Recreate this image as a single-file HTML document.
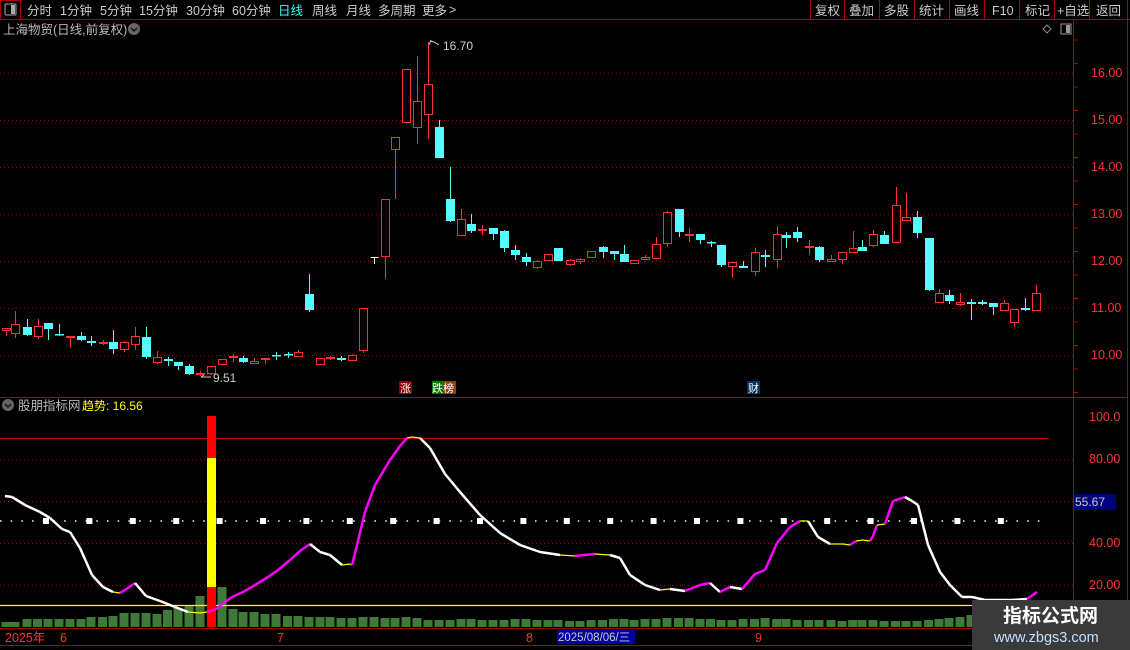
<!DOCTYPE html>
<html><head><meta charset="utf-8"><style>
body{margin:0;background:#000;width:1130px;height:650px;overflow:hidden;font-family:"Liberation Sans","Noto Sans CJK SC",sans-serif}
svg{position:absolute;left:0;top:0}
text{font-family:"Liberation Sans","Noto Sans CJK SC",sans-serif}
</style></head><body>
<svg id="s" width="1130" height="650" xmlns="http://www.w3.org/2000/svg">
<rect width="1130" height="650" fill="#000"/>
<line x1="0" y1="19.5" x2="1130" y2="19.5" stroke="#b00000"/>
<rect x="0.5" y="0.5" width="20" height="19" fill="none" stroke="#b00000"/>
<rect x="5" y="4" width="11" height="11" fill="none" stroke="#aaa" rx="1"/><rect x="11" y="5" width="4" height="9" fill="#aaa"/>
<g font-size="12.5" fill="#ccc">
<text x="27" y="15">分时</text><text x="60" y="15">1分钟</text><text x="100" y="15">5分钟</text><text x="139" y="15">15分钟</text><text x="186" y="15">30分钟</text><text x="232" y="15">60分钟</text>
<text x="278" y="15" fill="#3ff">日线</text><text x="312" y="15">周线</text><text x="346" y="15">月线</text><text x="378" y="15">多周期</text><text x="422" y="15">更多</text><text x="449" y="14">&gt;</text>
<text x="815" y="15">复权</text><text x="849" y="15">叠加</text><text x="884" y="15">多股</text><text x="919" y="15">统计</text><text x="954" y="15">画线</text><text x="992" y="15">F10</text><text x="1025" y="15">标记</text><text x="1057" y="15">+自选</text><text x="1096" y="15">返回</text>
<text x="3" y="34" fill="#bbb">上海物贸(日线,前复权)</text>
<text x="18" y="410" fill="#bbb">股朋指标网</text>
</g>
<g stroke="#b00000"><line x1="810.5" y1="0" x2="810.5" y2="19"/><line x1="844.5" y1="0" x2="844.5" y2="19"/><line x1="879.5" y1="0" x2="879.5" y2="19"/><line x1="914.5" y1="0" x2="914.5" y2="19"/><line x1="949.5" y1="0" x2="949.5" y2="19"/><line x1="984.5" y1="0" x2="984.5" y2="19"/><line x1="1019.5" y1="0" x2="1019.5" y2="19"/><line x1="1054.5" y1="0" x2="1054.5" y2="19"/><line x1="1089.5" y1="0" x2="1089.5" y2="19"/><line x1="1127.5" y1="0" x2="1127.5" y2="650"/></g>
<circle cx="134" cy="29" r="6" fill="#666"/><path d="M131 28l3 3 3-3" stroke="#111" fill="none" stroke-width="1.5"/>
<circle cx="8" cy="405" r="6" fill="#666"/><path d="M5 404l3 3 3-3" stroke="#111" fill="none" stroke-width="1.5"/>
<text x="82" y="410" font-size="12" fill="#ff0">趋势: 16.56</text>
<path d="M1047 25l4 4-4 4-4-4z" fill="none" stroke="#888"/>
<rect x="1061" y="24" width="10" height="10" fill="none" stroke="#999"/><rect x="1066" y="25" width="4" height="8" fill="#999"/>
<line x1="1073.5" y1="20" x2="1073.5" y2="628" stroke="#b00000"/>
<line x1="0" y1="397.5" x2="1127" y2="397.5" stroke="#b00000"/>
<line x1="0" y1="628.5" x2="1073" y2="628.5" stroke="#b00000"/>
<line x1="0" y1="645.5" x2="1130" y2="645.5" stroke="#b00000"/>
<g id="g"></g>
<rect x="399" y="381" width="13" height="13" fill="#800"/><text x="400" y="392" font-size="11" fill="#fff">涨</text>
<rect x="432" y="381" width="12" height="13" fill="#070"/><rect x="444" y="381" width="12" height="13" fill="#840"/><text x="432" y="392" font-size="11" fill="#fff">跌榜</text>
<rect x="747" y="381" width="13" height="13" fill="#036"/><text x="748" y="392" font-size="11" fill="#fff">财</text>
<text x="443" y="50" font-size="12" fill="#ccc">16.70</text><path d="M429 45l2-5 M430 41l4 1 5 3" stroke="#ccc" fill="none"/>
<text x="213" y="382" font-size="12" fill="#ccc">9.51</text><path d="M201 377h10 M201 377l3-2" stroke="#ccc" fill="none"/>
<g font-size="12.5" fill="#f33">
<text x="1091" y="77">16.00</text><text x="1091" y="124">15.00</text><text x="1091" y="171">14.00</text><text x="1091" y="218">13.00</text><text x="1091" y="265">12.00</text><text x="1091" y="312">11.00</text><text x="1091" y="359">10.00</text>
<text x="1089" y="421">100.0</text><text x="1089" y="463">80.00</text><text x="1089" y="547">40.00</text><text x="1089" y="589">20.00</text>
<text x="5" y="642">2025年</text><text x="60" y="642">6</text><text x="277" y="642">7</text><text x="526" y="642">8</text><text x="755" y="642">9</text>
</g>
<rect x="1074" y="494" width="42" height="16" fill="#00007a"/><text x="1075" y="506" font-size="12" fill="#ccc">55.67</text>
<rect x="557" y="630" width="78" height="14" fill="#0000a0"/><text x="558" y="641" font-size="11.5" fill="#ccc">2025/08/06/三</text>
<rect x="972" y="600" width="158" height="50" fill="#3a3a3a"/>
<text x="1003" y="622" font-size="19" font-weight="bold" fill="#fff">指标公式网</text>
<text x="994" y="642" font-size="14.5" fill="#bfe0ff">www.zbgs3.com</text>
</svg>
<script>
var g=document.getElementById('g'),h='';
function L(x1,y1,x2,y2,c,w,d){h+='<line x1="'+x1+'" y1="'+y1+'" x2="'+x2+'" y2="'+y2+'" stroke="'+c+'" stroke-width="'+(w||1)+'"'+(d?' stroke-dasharray="'+d+'"':'')+'/>';}
[73,120,167,214,261,308,355].forEach(function(y){L(0,y+.5,1073,y+.5,'#b00000',1,'1 3');});
for(var y=40;y<628;y+=23.5){if(y<397)L(1073,y,1078,y,'#b00000');}
[459,501,543,585].forEach(function(y){L(0,y+.5,1073,y+.5,'#b00000',1,'1 3');});
L(0,438.5,1049,438.5,'#c00000');
var X=[6,15,27,37.5,48,59,70,81,91,102.5,113,124,135,146,157,167.5,178,189,200,211,222,233,243,254,265,276,287.5,298,309,320,330,341,352,363,374,385,395,406,417,428,439,450,461,471,482,493,504,515,526,537,548,558,569.5,580,591,602.5,613.5,624,634,645,656,667,678.5,689,700,710.5,721,732,743,754.5,765,776.6,786,797,808.6,819,831,842,852.6,862,873,884,895.5,906,917,928.6,939,949,960,971,982,993,1004,1014,1025,1036];
var B=[622,622,619,619,619,619,619,619,617,617,616,613,613,613,614,610,608,606,596,587,587,609,612,612,614,614,616,616,617,617,617,618,618,617,617,618,618,617,618,620,620,620,619,619,620,620,620,619,619,620,620,620,621,621,620,620,619,619,620,619,619,618,618,618,619,619,620,620,619,619,618,619,619,620,620,620,620,621,620,620,620,621,621,621,621,620,619,618,617,615,612,610,607,606,604,604,605,606];
X.forEach(function(x,i){var t=B[i]||620;if(i==19)return;h+='<rect x="'+(x-4.5)+'" y="'+t+'" width="9" height="'+(627-t)+'" fill="#3f7a3a"/>';});
L(0,605.5,1130,605.5,'#ffff00',1.2);
L(0,521,1040,521,'#fff',1.5,'1.5 9.2');
for(var x=46;x<1040;x+=43.4)h+='<rect x="'+(x-3)+'" y="518" width="6" height="6" fill="#fff"/>';
var D="r328,331,328,336|r324,334,311,338|c327,335,319,336|r326,337,319,339|c323,329,323,340|c334,335,324,336|r336,337,336,347|c336,340,332,341|c341,343,336,346|r342,344,340,345|c342,349,330,354|r342,350,341,352|r336,345,327,350|c337,357,327,359|r357,363,351,364|c359,361,357,366|c362,366,362,370|c366,374,364,375|r373,375,371,376|r366,374,366,375|r359,365,359,365|r356,358,354,362|c358,362,356,363|r361,364,358,364|r358,359,358,364|c355,356,352,360|c354,355,352,358|r352,357,350,357|c294,310,274,312|r358,365,358,365|r357,359,356,360|c358,360,356,361|r355,361,354,361|r308,351,308,353|w257,258,257,264|r199,257,199,279|r137,150,137,199|r69,123,69,123|r101,128,56,144|r84,115,42,139|c127,158,120,158|c199,221,167,222|r219,236,209,236|c224,231,214,233|r229,231,225,235|c228,234,228,240|c231,248,230,252|c250,255,245,260|c257,262,253,266|r261,268,260,269|r254,261,254,261|c248,261,248,261|r260,265,259,266|r259,262,258,264|r251,258,251,258|c247,252,246,258|c251,254,251,260|c254,262,245,262|r260,264,260,264|r257,260,255,260|r244,259,237,259|r212,244,211,247|c209,232,209,237|r234,236,228,242|c234,240,234,244|c242,243,241,247|c245,265,245,267|r262,267,262,278|c266,268,261,268|r252,272,248,276|c255,257,250,267|r234,260,226,268|c235,238,232,248|c232,238,227,242|r246,248,240,255|c247,260,246,262|r259,262,255,262|r252,260,252,264|r248,253,231,253|c247,251,240,251|r234,246,230,247|c235,244,231,244|r205,243,187,243|r217,221,193,221|c217,233,211,238|c238,290,238,291|r293,303,289,303|c295,301,290,304|r302,305,293,306|c302,304,299,320|c302,304,300,305|c303,307,303,315|r303,311,300,311|r309,323,309,327|c308,310,298,311|r293,311,285,311".split('|');
D.forEach(function(s,i){var t=s[0],v=s.slice(1).split(',').map(Number),x=Math.round(X[i])+.5;
var col=t=='r'?'#ff3030':t=='c'?'#54ffff':'#fff';
L(x,v[2],x,v[3],col);
if(t=='c')h+='<rect x="'+(x-4.5)+'" y="'+v[0]+'" width="9" height="'+Math.max(1.5,v[1]-v[0])+'" fill="'+col+'"/>';
else if(t=='w')L(x-4,v[0]+.5,x+4,v[0]+.5,col);
else if(v[1]-v[0]<3)h+='<rect x="'+(x-4.5)+'" y="'+v[0]+'" width="9" height="'+Math.max(2,v[1]-v[0])+'" fill="'+col+'"/>';
else h+='<rect x="'+(x-4)+'" y="'+(v[0]+.5)+'" width="8" height="'+(v[1]-v[0]-1)+'" fill="#000" stroke="'+col+'"/>';
});
h+='<rect x="207" y="416" width="9" height="42" fill="#f00"/><rect x="207" y="458" width="9" height="129" fill="#ff0"/><rect x="207" y="587" width="9" height="40" fill="#f00"/>';
var P=[[5,496],[12,497],[25,505],[40,512],[50,518],[62,529],[70,532],[80,548],[92,575],[103,587],[113,592],[120,593],[125,590],[135,583],[146,596],[160,601],[175,607],[188,612],[200,613],[207,612],[216,609],[225,602],[232,597],[245,591],[255,585],[268,577],[278,570],[290,560],[300,551],[310,544],[320,552],[330,555],[342,565],[350,564],[352,565],[357,545],[365,512],[375,485],[390,460],[400,446],[407,438],[412,437],[420,438],[430,448],[445,474],[460,492],[480,515],[500,533],[520,545],[540,552],[560,555],[575,556],[595,554],[610,555],[620,558],[630,575],[645,585],[660,590],[670,589],[685,591],[700,585],[710,583],[720,592],[730,587],[742,589],[755,574],[765,570],[777,543],[790,527],[800,521],[808,521],[818,537],[830,544],[843,544],[850,545],[856,541],[863,540],[870,541],[873,536],[877,525],[885,524],[893,501],[905,497],[912,501],[918,505],[928,545],[940,572],[950,585],[962,597],[972,597],[985,600],[1000,600],[1012,600],[1027,599],[1037,592]];
for(var i=1;i<P.length;i++){var a=P[i-1],b=P[i],dy=b[1]-a[1],c,w;
if(dy<-1){c='#f0f';w=2.5}else if(dy>1){c='#fff';w=2.5}else{c='#ff0';w=1.2}
if(Math.abs(dy)<=1&&(a[0]>960||a[0]<20))c='#fff',w=2.5;
L(a[0],a[1],b[0],b[1],c,w);}
g.innerHTML=h;
</script>
</body></html>
